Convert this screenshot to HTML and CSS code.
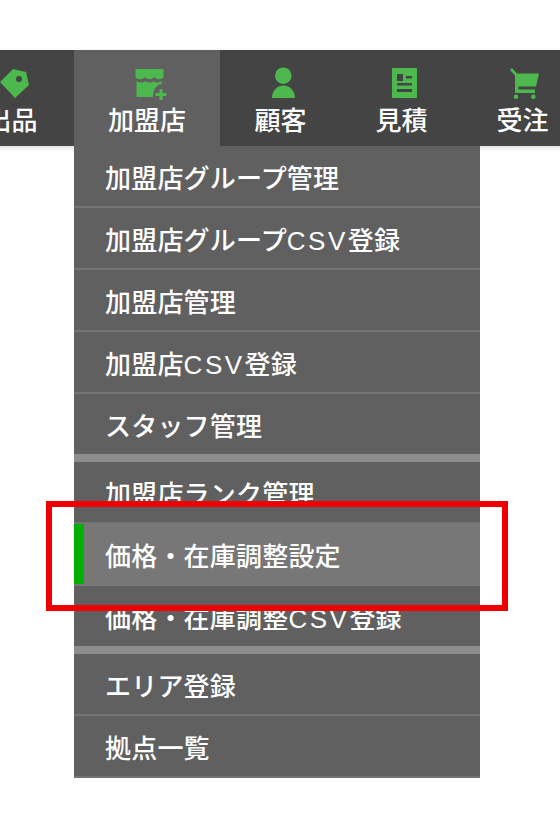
FILE: index.html
```html
<!DOCTYPE html>
<html lang="ja">
<head>
    <meta charset="UTF-8">
    <title>加盟店メニュー</title>
    <link rel="stylesheet" href="styles.css">
</head>
<body>
    <div class="page">
        <nav class="nav">
            <a class="nav-item first">
                <svg class="nav-icon" viewBox="0 0 30 30"><path fill-rule="evenodd" d="M1 14 14 1l13 3 3 13-14 13zM20 8a3 3 0 1 0 0 6 3 3 0 0 0 0-6z"/></svg>
                <span>出品</span>
            </a>
            <a class="nav-item active">
                <svg class="nav-icon" viewBox="0 0 30 30"><path d="M.5 1h28v8c-2 3-7 3-9.300 0-2 3-7 3-9.300 0-2 3-7.400 3-9.400 0z"/><path d="M1.500 13c3 2 6.500 2 8.500 0 3 2 6 2 8.500 0 2 2 5 2 8 0v3c-5 1-8.500 5-8.500 13H1.500z"/><path d="M24.500 21h3v4h4v3h-4v4h-3v-4h-4v-3h4z"/></svg>
                <span>加盟店</span>
            </a>
            <a class="nav-item">
                <svg class="nav-icon" viewBox="0 0 30 30"><circle cx="15.300" cy="7.700" r="8.300"/><path d="M4 30c0-7 5-12.500 11.500-12.500S27 23 27 30z"/></svg>
                <span>顧客</span>
            </a>
            <a class="nav-item">
                <svg class="nav-icon" viewBox="0 0 30 30"><path fill-rule="evenodd" d="M4 0h23a1 1 0 0 1 1 1v28a1 1 0 0 1-1 1H4a1 1 0 0 1-1-1V1a1 1 0 0 1 1-1zM8 6v7h6V6zM17 8v2.500h6V8zM8 15v2.500h15V15zM8 21v3h15v-3z"/></svg>
                <span>見積</span>
            </a>
            <a class="nav-item">
                <svg class="nav-icon" viewBox="0 0 30 30"><path d="M0 2l2-2 5 5.500h22l-3 13H8.500v3H25V25H5V7.500z"/><circle cx="6" cy="28.700" r="2.300"/><circle cx="23.300" cy="28.700" r="2.300"/></svg>
                <span>受注</span>
            </a>
        </nav>

        <ul class="dropdown">
            <li class="drop-item">加盟店グループ管理</li>
            <li class="drop-item">加盟店グループ<span class="latin">CSV</span>登録</li>
            <li class="drop-item">加盟店管理</li>
            <li class="drop-item">加盟店<span class="latin">CSV</span>登録</li>
            <li class="drop-item group-end">スタッフ管理</li>
            <li class="drop-item">加盟店ランク管理</li>
            <li class="drop-item current">価格・在庫調整設定</li>
            <li class="drop-item group-end">価格・在庫調整<span class="latin">CSV</span>登録</li>
            <li class="drop-item">エリア登録</li>
            <li class="drop-item">拠点一覧</li>
        </ul>

        <div class="callout"></div>
    </div>
</body>
</html>
```

FILE: styles.css
```css
:root {
    --nav-bg: #444444;
    --panel-bg: #606060;
    --line: #747474;
    --line-thick: #8c8c8c;
    --green: #4db84d;
}

html, body {
    margin: 0;
    background: #ffffff;
}

body {
    font-family: "Liberation Sans", "Noto Sans CJK JP", sans-serif;
    font-weight: 500;
    color: #ffffff;
    overflow: hidden;
}

.page {
    position: relative;
    width: 560px;
    height: 840px;
    padding-top: 50px;
    box-sizing: border-box;
    overflow: hidden;
}

.nav {
    display: flex;
    height: 96px;
    margin-left: -47px;
    width: 640px;
    background: var(--nav-bg);
    box-shadow: 0 2px 5px rgba(0, 0, 0, 0.15);
}

.nav-item {
    display: flex;
    flex-direction: column;
    align-items: center;
    padding: 0 34.5px;
    font-size: 26px;
    line-height: 30px;
}

.nav-item.first {
    padding: 0 36.5px 0 32.5px;
}

.nav-item.active {
    padding: 0 34px;
    background: var(--panel-bg);
}

.nav-icon {
    width: 30px;
    height: 30px;
    margin: 18px 0 8px 5px;
    fill: var(--green);
    overflow: visible;
}

.dropdown {
    list-style: none;
    position: relative;
    width: 406px;
    margin: 0 0 0 74px;
    padding: 0;
    background: var(--panel-bg);
}

.drop-item {
    box-sizing: border-box;
    height: 62px;
    padding: 0 0 0 31px;
    font-size: 26px;
    line-height: 66px;
    letter-spacing: 0.2px;
    border-bottom: 2px solid var(--line);
}

.drop-item.group-end {
    height: 68px;
    border-bottom: 8px solid var(--line-thick);
}

.drop-item.current {
    background: #777777;
    border-bottom-color: #777777;
    box-shadow: inset 10px 0 0 #00b000;
}

.latin {
    letter-spacing: 2.5px;
}

.callout {
    position: absolute;
    left: 46px;
    top: 501px;
    width: 450px;
    height: 98px;
    border: 6px solid #ee0000;
}
```
